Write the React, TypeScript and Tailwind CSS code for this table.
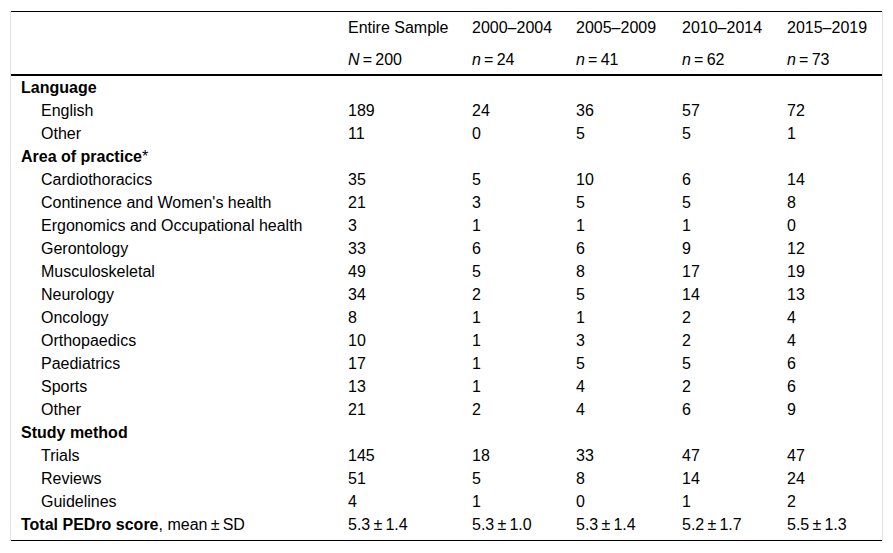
const TS = "\u2009";

type Row =
  | { kind: "group"; label: React.ReactNode }
  | { kind: "item"; label: string; values: string[]; bold?: boolean };

const pm = (a: string, b: string) => `${a}${TS}±${TS}${b}`;

const rows: Row[] = [
  { kind: "group", label: "Language" },
  { kind: "item", label: "English", values: ["189", "24", "36", "57", "72"] },
  { kind: "item", label: "Other", values: ["11", "0", "5", "5", "1"] },
  {
    kind: "group",
    label: (
      <>
        Area of practice<span className="font-normal">*</span>
      </>
    ),
  },
  { kind: "item", label: "Cardiothoracics", values: ["35", "5", "10", "6", "14"] },
  { kind: "item", label: "Continence and Women's health", values: ["21", "3", "5", "5", "8"] },
  { kind: "item", label: "Ergonomics and Occupational health", values: ["3", "1", "1", "1", "0"] },
  { kind: "item", label: "Gerontology", values: ["33", "6", "6", "9", "12"] },
  { kind: "item", label: "Musculoskeletal", values: ["49", "5", "8", "17", "19"] },
  { kind: "item", label: "Neurology", values: ["34", "2", "5", "14", "13"] },
  { kind: "item", label: "Oncology", values: ["8", "1", "1", "2", "4"] },
  { kind: "item", label: "Orthopaedics", values: ["10", "1", "3", "2", "4"] },
  { kind: "item", label: "Paediatrics", values: ["17", "1", "5", "5", "6"] },
  { kind: "item", label: "Sports", values: ["13", "1", "4", "2", "6"] },
  { kind: "item", label: "Other", values: ["21", "2", "4", "6", "9"] },
  { kind: "group", label: "Study method" },
  { kind: "item", label: "Trials", values: ["145", "18", "33", "47", "47"] },
  { kind: "item", label: "Reviews", values: ["51", "5", "8", "14", "24"] },
  { kind: "item", label: "Guidelines", values: ["4", "1", "0", "1", "2"] },
];

const headers = [
  { period: "Entire Sample", sym: "N", n: "200" },
  { period: "2000–2004", sym: "n", n: "24" },
  { period: "2005–2009", sym: "n", n: "41" },
  { period: "2010–2014", sym: "n", n: "62" },
  { period: "2015–2019", sym: "n", n: "73" },
];

const totals = [pm("5.3", "1.4"), pm("5.3", "1.0"), pm("5.3", "1.4"), pm("5.2", "1.7"), pm("5.5", "1.3")];

export default function App() {
  return (
    <div className="min-h-[553px] w-[893px] bg-white pt-[11px] pl-[10px] font-['Liberation_Sans',Arial,sans-serif] text-[16px] text-black">
      <div className="w-[873px] border-x border-[#e3e3e3]">
        <table className="w-[871px] table-fixed border-collapse border-t border-b border-black">
          <colgroup>
            <col className="w-[327px]" />
            <col className="w-[124px]" />
            <col className="w-[104px]" />
            <col className="w-[106px]" />
            <col className="w-[105px]" />
            <col className="w-[105px]" />
          </colgroup>
          <thead>
            <tr className="h-[31px] leading-[23px]">
              <th />
              {headers.map((h) => (
                <th key={h.period} className="px-[10px] text-left font-normal whitespace-nowrap">
                  {h.period}
                </th>
              ))}
            </tr>
            <tr className="h-[32px] border-b-2 border-black leading-[23px]">
              <th />
              {headers.map((h) => (
                <th key={h.period} className="px-[10px] pt-[2px] text-left font-normal whitespace-nowrap">
                  <i>{h.sym}</i>
                  {`${TS}=${TS}${h.n}`}
                </th>
              ))}
            </tr>
          </thead>
          <tbody className="leading-[23px]">
            {rows.map((r, i) =>
              r.kind === "group" ? (
                <tr key={i} className="h-[23px]">
                  <td colSpan={6} className="pl-[10px] font-bold">
                    {r.label}
                  </td>
                </tr>
              ) : (
                <tr key={i} className="h-[23px]">
                  <td className="pl-[30px] whitespace-nowrap">{r.label}</td>
                  {r.values.map((v, j) => (
                    <td key={j} className="px-[10px]">
                      {v}
                    </td>
                  ))}
                </tr>
              )
            )}
            <tr className="h-[28px] align-top">
              <td className="pl-[10px] whitespace-nowrap">
                <span className="font-bold">Total PEDro score</span>, mean{TS}±{TS}SD
              </td>
              {totals.map((v, j) => (
                <td key={j} className="px-[10px] whitespace-nowrap">
                  {v}
                </td>
              ))}
            </tr>
          </tbody>
        </table>
      </div>
    </div>
  );
}
